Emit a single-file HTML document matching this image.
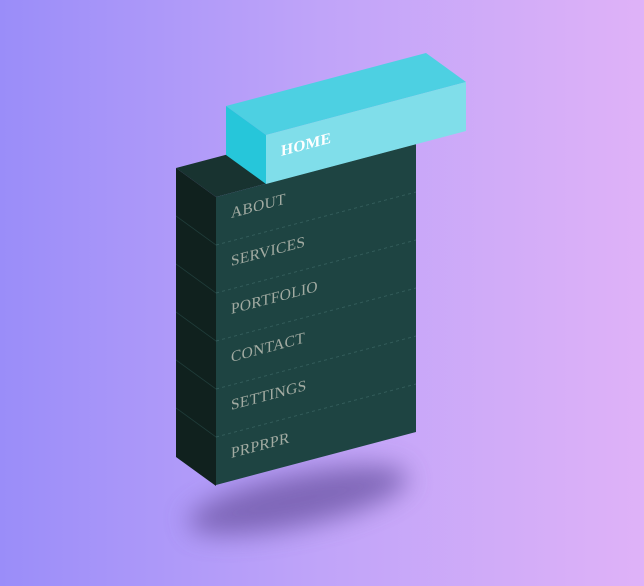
<!DOCTYPE html>
<html><head><style>
html,body{margin:0;padding:0;width:644px;height:586px;overflow:hidden;background:linear-gradient(90deg,#9a8df9 0%,#c0a4f9 50%,#dfb2f8 100%);}
svg{position:absolute;left:0;top:0}
text{font-family:"Liberation Serif",serif;font-size:15.5px;fill:#a2aba2;letter-spacing:0.3px}
</style></head><body>
<svg width="644" height="586" viewBox="0 0 644 586">
<defs><filter id="b" x="-50%" y="-100%" width="200%" height="300%"><feGaussianBlur stdDeviation="13"/></filter></defs>
<ellipse cx="298" cy="500" rx="112" ry="26" transform="rotate(-12 298 500)" fill="#6f58a8" opacity="0.8" filter="url(#b)"/>
<polygon points="176,168 216,197 416,144 376,115" fill="#183330"/>
<g transform="matrix(1,0.725,0,1,176,168)">
<rect x="0" y="0" width="40" height="289" fill="#10211e"/>
<g stroke="#203d3a" stroke-width="1">
<line x1="0" y1="48" x2="40" y2="48"/><line x1="0" y1="96" x2="40" y2="96"/><line x1="0" y1="144" x2="40" y2="144"/><line x1="0" y1="192" x2="40" y2="192"/><line x1="0" y1="240" x2="40" y2="240"/>
</g></g>
<g transform="matrix(1,-0.265,0,1,216,197)">
<rect x="0" y="0" width="200" height="288" fill="#1e4442"/>
<g stroke="#335c5a" stroke-width="1" stroke-dasharray="3,3">
<line x1="0" y1="48" x2="200" y2="48"/><line x1="0" y1="96" x2="200" y2="96"/><line x1="0" y1="144" x2="200" y2="144"/><line x1="0" y1="192" x2="200" y2="192"/><line x1="0" y1="240" x2="200" y2="240"/>
</g>
<text x="15" y="25">ABOUT</text>
<text x="15" y="73">SERVICES</text>
<text x="15" y="121">PORTFOLIO</text>
<text x="15" y="169">CONTACT</text>
<text x="15" y="217">SETTINGS</text>
<text x="15" y="265">PRPRPR</text>
</g>
<polygon points="226,106 266,135 466,82 426,53" fill="#4dd0e2"/>
<polygon points="226,106 266,135 266,184 226,155" fill="#26c6da"/>
<g transform="matrix(1,-0.265,0,1,266,135)">
<rect x="0" y="0" width="200" height="49" fill="#80deea"/>
<text x="15" y="25" style="fill:#fff;font-weight:bold">HOME</text>
</g>
</svg>
</body></html>
